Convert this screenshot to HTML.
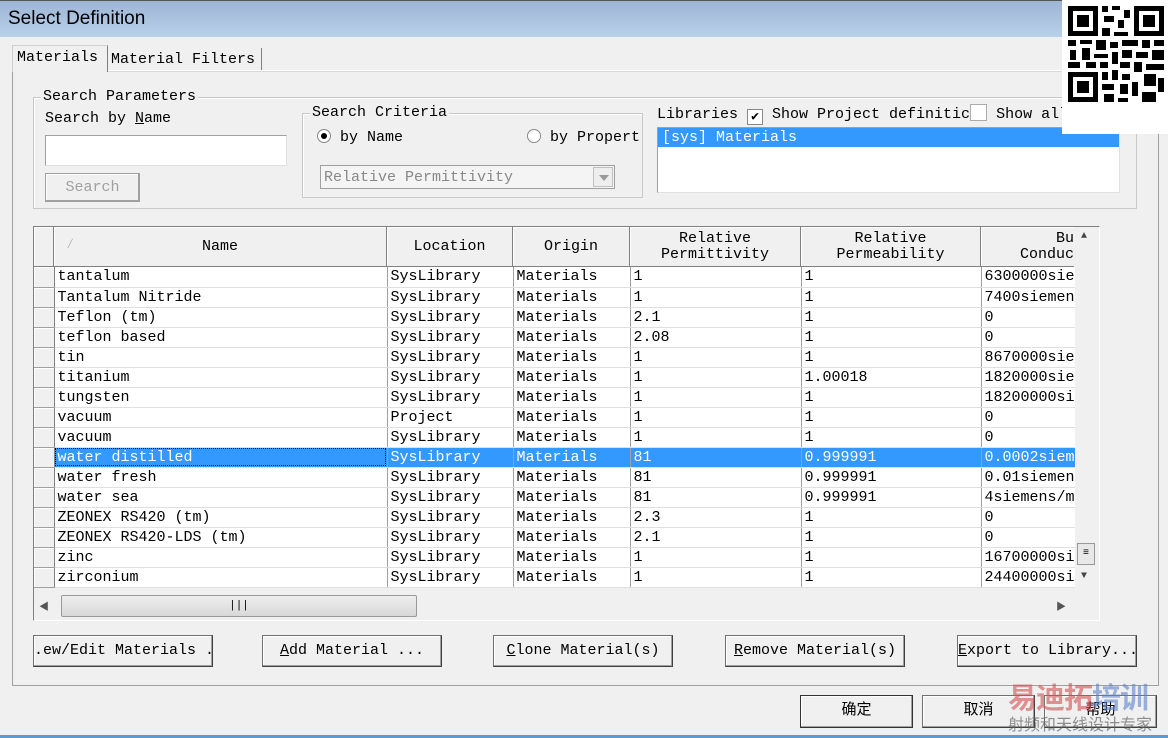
<!DOCTYPE html>
<html><head><meta charset="utf-8">
<style>
*{box-sizing:border-box;margin:0;padding:0}
body{width:1168px;height:738px;overflow:hidden;background:#f0f0f0;position:relative;font-family:"Liberation Mono","Noto Sans CJK SC",monospace;font-size:15px;color:#000}
.a{position:absolute}
.title{left:0;top:0;width:1168px;height:37px;background:linear-gradient(#9db6d5,#b9d0ea);border-top:1px solid #555;}
.title span{position:absolute;left:8px;top:7px;font-family:"Liberation Sans",sans-serif;font-size:19px}
.grp{border:1px solid #c8c8c8;box-shadow:inset 1px 1px 0 #fff}
.lbl{background:#f0f0f0;padding:0 2px;white-space:nowrap;line-height:16px}
.btn{border:1px solid #707070;border-right-color:#404040;border-bottom-color:#404040;box-shadow:inset -1px -1px 0 #a0a0a0,inset 1px 1px 0 #fff;background:#f0f0f0;text-align:center;line-height:30px;white-space:nowrap;overflow:hidden}
table{border-collapse:collapse;table-layout:fixed;width:1041px}
td{height:20px;border-right:1px solid #a0a0a0;border-bottom:1px solid #e0e0e0;padding:0 0 0 3px;white-space:nowrap;overflow:hidden;line-height:19px;background:#fff;vertical-align:top}
td.rh{background:#f0f0f0;border-right:1px solid #808080;border-bottom:1px solid #a0a0a0;box-shadow:inset 1px 1px 0 #fff}
tr.sel td{background:#3399ff;color:#fff}
tr.sel td.rh{background:#f0f0f0}
.hd{position:absolute;top:0;height:40px;background:#f0f0f0;border-right:1px solid #808080;border-bottom:1px solid #808080;box-shadow:inset 1px 1px 0 #fff;text-align:center;line-height:16px;white-space:nowrap;overflow:hidden}
</style></head><body>
<div class="a title"><span>Select Definition</span></div>

<div class="a" style="left:12px;top:70px;width:1147px;height:616px;border:1px solid #a0a0a0;border-top-color:#fff;box-shadow:inset 0 1px 0 #d8d8d8"></div>
<div class="a" style="left:12px;top:45px;width:96px;height:27px;border:1px solid #d0d0d0;border-bottom:none;background:#f0f0f0;border-right:1px solid #808080"><span class="a" style="left:4px;top:3px">Materials</span></div>
<div class="a" style="left:108px;top:48px;width:154px;height:22px;border-right:1px solid #808080"><span class="a" style="left:3px;top:3px">Material Filters</span></div>

<div class="a grp" style="left:33px;top:97px;width:1104px;height:112px"></div>
<div class="a lbl" style="left:41px;top:89px">Search Parameters</div>
<div class="a" style="left:45px;top:110px">Search by <u>N</u>ame</div>
<div class="a" style="left:45px;top:135px;width:242px;height:31px;background:#fff;border:1px solid #a0a0a0;border-right-color:#e0e0e0;border-bottom-color:#e0e0e0"></div>
<div class="a btn" style="left:45px;top:173px;width:95px;height:29px;line-height:27px;color:#a0a0a0;border-color:#a0a0a0">Search</div>

<div class="a grp" style="left:302px;top:113px;width:341px;height:85px"></div>
<div class="a lbl" style="left:310px;top:105px">Search Criteria</div>
<div class="a" style="left:317px;top:129px;width:14px;height:14px;border-radius:50%;background:#fff;border:1px solid #888"><div class="a" style="left:3px;top:3px;width:6px;height:6px;border-radius:50%;background:#000"></div></div>
<div class="a" style="left:340px;top:129px">by Name</div>
<div class="a" style="left:527px;top:129px;width:14px;height:14px;border-radius:50%;background:#fff;border:1px solid #888"></div>
<div class="a" style="left:550px;top:129px">by Propert</div>
<div class="a" style="left:320px;top:165px;width:295px;height:24px;border:1px solid #a0a0a0;background:#f4f4f4;color:#888"><span class="a" style="left:3px;top:3px">Relative Permittivity</span>
<div class="a" style="right:1px;top:1px;width:20px;height:20px;border:1px solid #c0c0c0;background:#eee"><div class="a" style="left:5px;top:7px;border-left:5px solid transparent;border-right:5px solid transparent;border-top:6px solid #999"></div></div></div>

<div class="a" style="left:657px;top:104px;white-space:nowrap">Libraries <span style="display:inline-block;width:16px;height:16px;border:1px solid #888;background:#fff;vertical-align:-2px;font-size:13px;line-height:14px;text-align:center">✔</span> Show Project definitic<span style="display:inline-block;width:17px;height:17px;border:1px solid #aaa;background:#fff;vertical-align:-3px"></span> Show all</div>
<div class="a" style="left:657px;top:127px;width:463px;height:66px;background:#fff;border:1px solid #a0a0a0;border-right-color:#e0e0e0;border-bottom-color:#e0e0e0">
<div style="background:#3399ff;color:#fff;height:19px;line-height:20px;padding-left:4px">[sys] Materials</div></div>

<div class="a" style="left:1062px;top:0;width:106px;height:134px;background:#fff">
<svg width="106" height="134" viewBox="0 0 106 134"><g fill="#000">
<path d="M6 6h30v30H6zM11 11v20h20V11z M15 15h12v12H15z"/>
<path d="M72 6h30v30H72zM77 11v20h20V11z M81 15h12v12H81z"/>
<path d="M6 72h30v30H6zM11 77v20h20V77z M15 81h12v12H15z"/>
<path d="M40 6h6v6h-6zM50 6h8v4h-8zM62 10h6v8h-6zM42 16h10v6H42zM56 20h6v8h-6zM40 28h8v8h-8zM52 32h14v4H52zM6 40h8v6H6zM18 40h12v4H18zM34 40h10v10H34zM48 42h8v6h-8zM60 40h16v6H60zM80 40h8v8h-8zM92 40h10v6H92zM8 50h6v10H8zM20 48h8v12h-8zM32 54h14v4H32zM50 52h6v12h-6zM60 50h10v8H60zM74 52h12v6H74zM90 50h12v10H90zM6 62h12v6H6zM24 62h10v6H24zM38 62h8v6h-8zM58 62h10v6H58zM72 62h8v10h-8zM84 64h18v6H84zM40 72h6v8h-6zM50 70h6v10h-6zM60 74h8v6h-8zM82 74h12v12H82zM40 84h12v6H40zM58 84h8v10h-8zM70 82h6v14h-6zM96 78h6v14h-6zM42 94h10v8H42zM56 98h10v4H56zM80 92h14v10H80z"/>
</g></svg></div>

<div class="a" style="left:33px;top:226px;width:1067px;height:395px;border:1px solid #808080;background:#f0f0f0;border-right-color:#fff;border-bottom-color:#fff;overflow:hidden">
<div class="hd" style="left:0;width:20px"></div>
<div class="hd" style="left:20px;width:333px;line-height:40px">Name<span class="a" style="left:12px;top:-2px;color:#aaa;font-size:14px">∕</span></div>
<div class="hd" style="left:353px;width:126px;line-height:40px">Location</div>
<div class="hd" style="left:479px;width:117px;line-height:40px">Origin</div>
<div class="hd" style="left:596px;width:171px;padding-top:4px">Relative<br>Permittivity</div>
<div class="hd" style="left:767px;width:180px;padding-top:4px">Relative<br>Permeability</div>
<div class="hd" style="left:947px;width:94px;padding-top:4px;text-align:right;padding-right:0">Bu<br>Conduc</div>
<div class="a" style="left:1040px;top:0;width:25px;height:362px;background:#f0f0f0"><span class="a" style="left:7px;top:4px;font-size:10px;color:#444">▲</span><span class="a" style="left:7px;top:344px;font-size:10px;color:#444">▼</span>
<div class="a" style="left:3px;top:316px;width:18px;height:22px;border:1px solid #999;background:#e8e8e8;font-size:10px;text-align:center;line-height:20px">≡</div></div>
<div class="a" style="left:0;top:40px;width:1041px;height:322px;overflow:hidden">
<table>
<colgroup><col style="width:20px"><col style="width:333px"><col style="width:126px"><col style="width:117px"><col style="width:171px"><col style="width:180px"><col style="width:94px"></colgroup>
<tr><td class="rh"></td><td>tantalum</td><td>SysLibrary</td><td>Materials</td><td>1</td><td>1</td><td>6300000siemens</td></tr>
<tr><td class="rh"></td><td>Tantalum Nitride</td><td>SysLibrary</td><td>Materials</td><td>1</td><td>1</td><td>7400siemens</td></tr>
<tr><td class="rh"></td><td>Teflon (tm)</td><td>SysLibrary</td><td>Materials</td><td>2.1</td><td>1</td><td>0</td></tr>
<tr><td class="rh"></td><td>teflon based</td><td>SysLibrary</td><td>Materials</td><td>2.08</td><td>1</td><td>0</td></tr>
<tr><td class="rh"></td><td>tin</td><td>SysLibrary</td><td>Materials</td><td>1</td><td>1</td><td>8670000siemens</td></tr>
<tr><td class="rh"></td><td>titanium</td><td>SysLibrary</td><td>Materials</td><td>1</td><td>1.00018</td><td>1820000siemens</td></tr>
<tr><td class="rh"></td><td>tungsten</td><td>SysLibrary</td><td>Materials</td><td>1</td><td>1</td><td>18200000siemens</td></tr>
<tr><td class="rh"></td><td>vacuum</td><td>Project</td><td>Materials</td><td>1</td><td>1</td><td>0</td></tr>
<tr><td class="rh"></td><td>vacuum</td><td>SysLibrary</td><td>Materials</td><td>1</td><td>1</td><td>0</td></tr>
<tr class="sel"><td class="rh"></td><td style="outline:1px dotted #000;outline-offset:-2px">water distilled</td><td>SysLibrary</td><td>Materials</td><td>81</td><td>0.999991</td><td>0.0002siemens</td></tr>
<tr><td class="rh"></td><td>water fresh</td><td>SysLibrary</td><td>Materials</td><td>81</td><td>0.999991</td><td>0.01siemens</td></tr>
<tr><td class="rh"></td><td>water sea</td><td>SysLibrary</td><td>Materials</td><td>81</td><td>0.999991</td><td>4siemens/m</td></tr>
<tr><td class="rh"></td><td>ZEONEX RS420 (tm)</td><td>SysLibrary</td><td>Materials</td><td>2.3</td><td>1</td><td>0</td></tr>
<tr><td class="rh"></td><td>ZEONEX RS420-LDS (tm)</td><td>SysLibrary</td><td>Materials</td><td>2.1</td><td>1</td><td>0</td></tr>
<tr><td class="rh"></td><td>zinc</td><td>SysLibrary</td><td>Materials</td><td>1</td><td>1</td><td>16700000siemens</td></tr>
<tr><td class="rh"></td><td>zirconium</td><td>SysLibrary</td><td>Materials</td><td>1</td><td>1</td><td>24400000siemens</td></tr>
</table></div>
<div class="a" style="left:0;top:364px;width:1040px;height:30px;background:#f0f0f0">
<span class="a" style="left:5px;top:7px;font-size:10px;color:#555">◀</span>
<div class="a" style="left:27px;top:4px;width:356px;height:22px;border:1px solid #999;border-radius:2px;background:linear-gradient(#eee,#d8d8d8);text-align:center;line-height:20px;font-size:11px">|||</div>
<span class="a" style="left:1022px;top:7px;font-size:10px;color:#555">▶</span></div>
</div>

<div class="a btn" style="left:33px;top:635px;width:180px;height:32px">.ew/Edit Materials ..</div>
<div class="a btn" style="left:262px;top:635px;width:180px;height:32px"><u>A</u>dd Material ...</div>
<div class="a btn" style="left:493px;top:635px;width:180px;height:32px"><u>C</u>lone Material(s)</div>
<div class="a btn" style="left:725px;top:635px;width:180px;height:32px"><u>R</u>emove Material(s)</div>
<div class="a btn" style="left:957px;top:635px;width:180px;height:32px"><u>E</u>xport to Library...</div>

<div class="a btn" style="left:800px;top:695px;width:113px;height:33px;border:1px solid #333">确定</div>
<div class="a btn" style="left:922px;top:695px;width:113px;height:33px">取消</div>
<div class="a btn" style="left:1044px;top:695px;width:113px;height:33px">帮助</div>
<div class="a" style="left:1008px;top:680px;font-size:29px;font-weight:bold;color:rgba(210,80,80,.6);font-family:'Noto Sans CJK SC',sans-serif;line-height:32px;letter-spacing:-1px">易迪拓<span style="color:rgba(90,130,200,.6)">培训</span></div>
<div class="a" style="left:1008px;top:713px;font-size:16px;color:rgba(100,100,100,.7);font-family:'Noto Sans CJK SC',sans-serif;line-height:20px">射频和天线设计专家</div>
<div class="a" style="left:0;top:735px;width:1168px;height:3px;background:#5a9bd5"></div>
</body></html>
